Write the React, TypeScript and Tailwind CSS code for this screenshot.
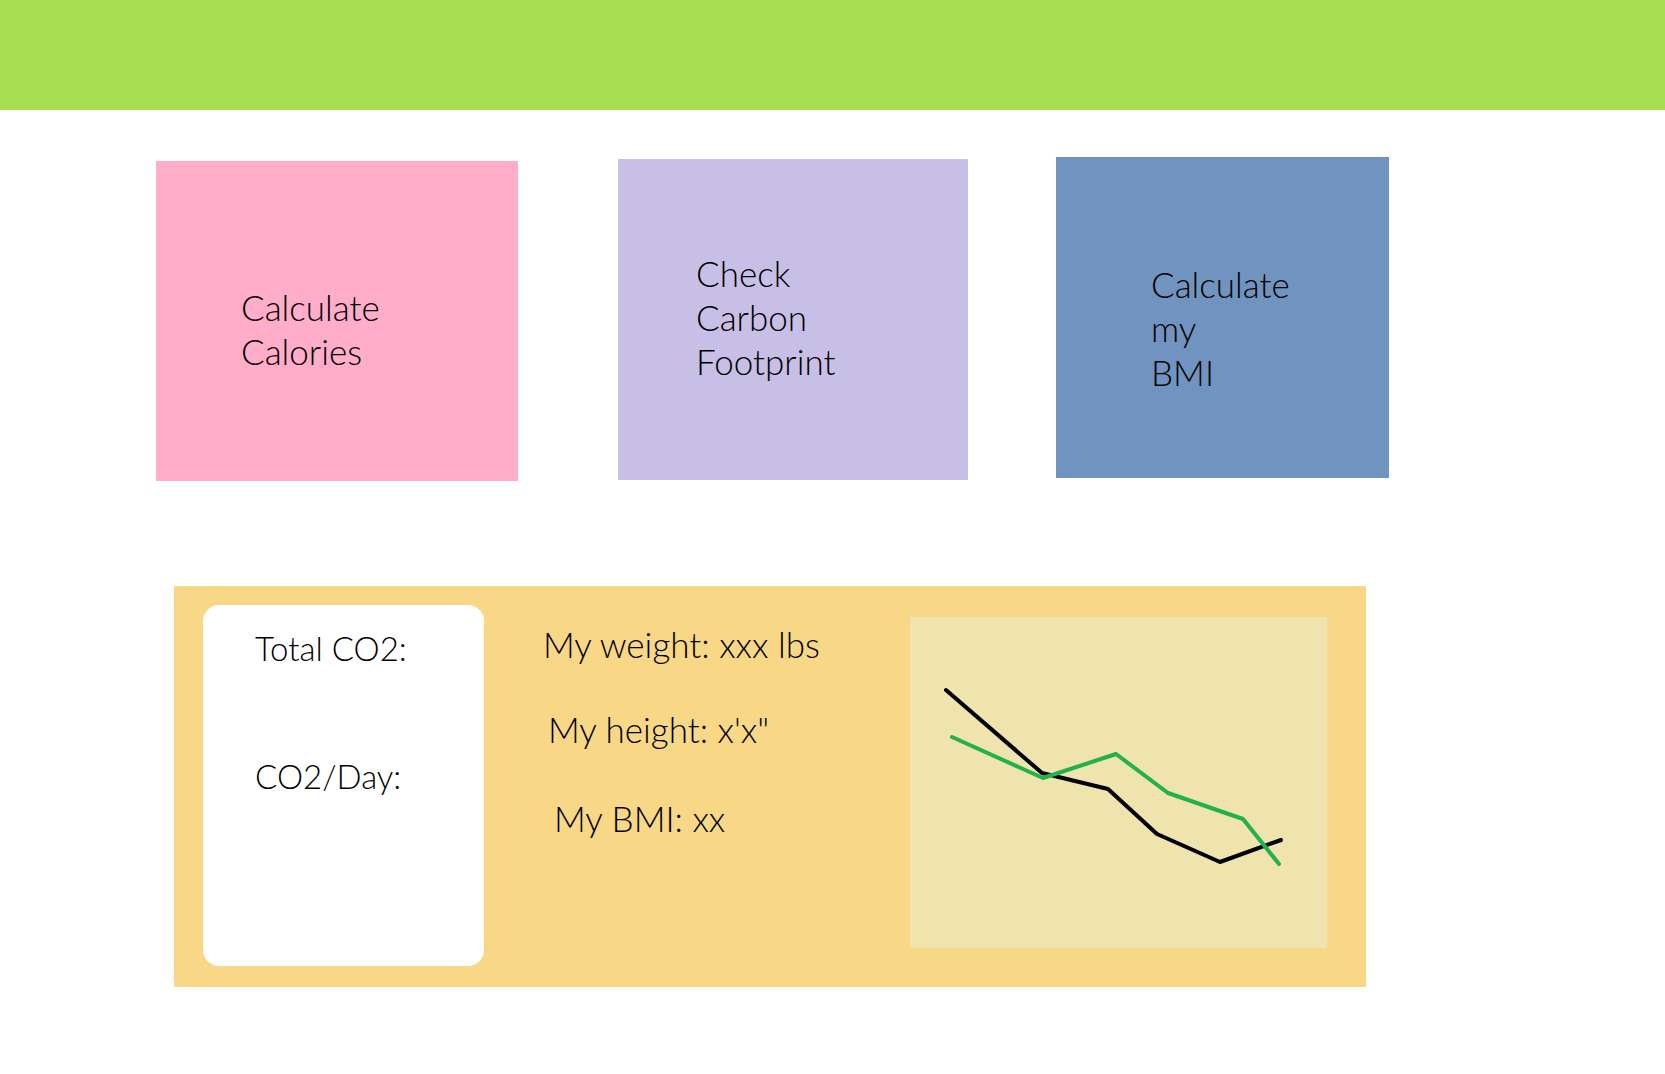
export default function App() {
  const font = { fontFamily: "Lato, 'Open Sans', sans-serif" }

  return (
    <div className="w-[1665px] min-h-[1074px] bg-white text-black font-light text-[35px] leading-[44px]" style={font}>
      {/* Top bar */}
      <div className="h-[110px] bg-[#a6de50]" />

      {/* Action cards */}
      <div className="flex items-start pl-[156px]">
        <div className="mt-[51px] w-[362px] h-[320px] bg-[#ffadc9] pl-[85px] pt-[124px]">
          <div>Calculate</div>
          <div>Calories</div>
        </div>
        <div className="ml-[100px] mt-[49px] w-[350px] h-[321px] bg-[#c7bfe6] pl-[78px] pt-[92px]">
          <div>Check</div>
          <div>Carbon</div>
          <div>Footprint</div>
        </div>
        <div className="ml-[88px] mt-[47px] w-[333px] h-[321px] bg-[#7093bf] pl-[95px] pt-[105px]">
          <div>Calculate</div>
          <div>my</div>
          <div>BMI</div>
        </div>
      </div>

      {/* Stats panel */}
      <div className="mt-[105px] ml-[174px] w-[1192px] h-[401px] bg-[#f8d886] flex items-start pl-[29px]">
        <div className="mt-[19px] w-[281px] h-[361px] bg-white rounded-[16px] pl-[52px] pt-[21px] text-[33px]">
          <div>Total CO2:</div>
          <div className="mt-[84px]">CO2/Day:</div>
        </div>

        <div className="w-[426px] pt-[36px]">
          <div className="pl-[59px]">My weight: xxx lbs</div>
          <div className="pl-[64px] mt-[41px]">My height: x'x"</div>
          <div className="pl-[70px] mt-[45px]">My BMI: xx</div>
        </div>

        <div className="mt-[31px] w-[417px] h-[331px] bg-[#efe3ae]">
          <svg width="417" height="331" viewBox="0 0 417 331" fill="none">
            <polyline
              points="36,73 132,156 198,172 247,217 310,245 371,223"
              stroke="#000000"
              strokeWidth="4"
              strokeLinejoin="round"
              strokeLinecap="round"
            />
            <polyline
              points="42,120 133,161 206,137 258,176 333,202 369,247"
              stroke="#22b14c"
              strokeWidth="4"
              strokeLinejoin="round"
              strokeLinecap="round"
            />
          </svg>
        </div>
      </div>
    </div>
  )
}
